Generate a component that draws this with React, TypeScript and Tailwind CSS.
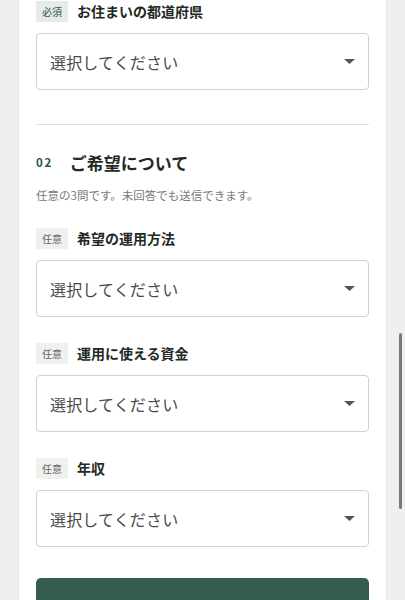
import React from 'react';

const FONT = { fontFamily: '"Noto Sans CJK JP", "Noto Sans", sans-serif' };

function Badge({ required }: { required?: boolean }) {
  return (
    <span
      className={
        'flex h-[21px] w-[32px] items-center justify-center text-[10px] ' +
        (required ? 'bg-[#e6ebe7] text-[#2f5446]' : 'bg-[#f0f0ef] text-[#666]')
      }
    >
      {required ? '必須' : '任意'}
    </span>
  );
}

function SelectField({ label, required }: { label: string; required?: boolean }) {
  return (
    <div>
      <div className="flex items-center gap-[9px]">
        <Badge required={required} />
        <span className="text-[14px] font-bold text-[#1f2a25]">{label}</span>
      </div>
      <div className="mt-[11px] flex h-[57px] items-center justify-between rounded-[4px] border border-[#cfd1cf] bg-white pl-[13px] pr-[13px]">
        <span className="text-[16px] tracking-[0.01em] text-[#4a4a4a]">選択してください</span>
        <svg width="11" height="5" viewBox="0 0 11 5">
          <path d="M0 0 L11 0 L5.5 5 Z" fill="#4f5753" />
        </svg>
      </div>
    </div>
  );
}

export default function App() {
  return (
    <div className="relative min-h-[600px] bg-[#eff0ee]" style={FONT}>
      <div className="mx-[18px] h-[600px] overflow-hidden border-x border-[#e3e5e2] bg-white px-[17px] pt-[1px]">
        <SelectField label="お住まいの都道府県" required />

        <div className="mt-[34px] h-px bg-[#dddfdc]" />

        <div className="mt-[26px] flex items-center gap-[17px]">
          <span className="text-[11.5px] font-bold tracking-[0.14em] text-[#2f5446]">02</span>
          <h2 className="text-[17px] font-bold leading-[24px] text-[#1f2a25]">ご希望について</h2>
        </div>
        <p className="mt-[12px] text-[11.5px] leading-[16px] text-[#7a7a7a]">
          任意の3問です。未回答でも送信できます。
        </p>

        <div className="mt-[25px] flex flex-col gap-[26px]">
          <SelectField label="希望の運用方法" />
          <SelectField label="運用に使える資金" />
          <SelectField label="年収" />
        </div>

        <button className="mt-[31px] h-[56px] w-full rounded-[5px] bg-[#335e4f]" />
      </div>

      {/* overlay scrollbar */}
      <div className="absolute left-[399px] top-[333px] h-[176px] w-[3px] rounded-full bg-[#7a7a7a]" />
    </div>
  );
}
